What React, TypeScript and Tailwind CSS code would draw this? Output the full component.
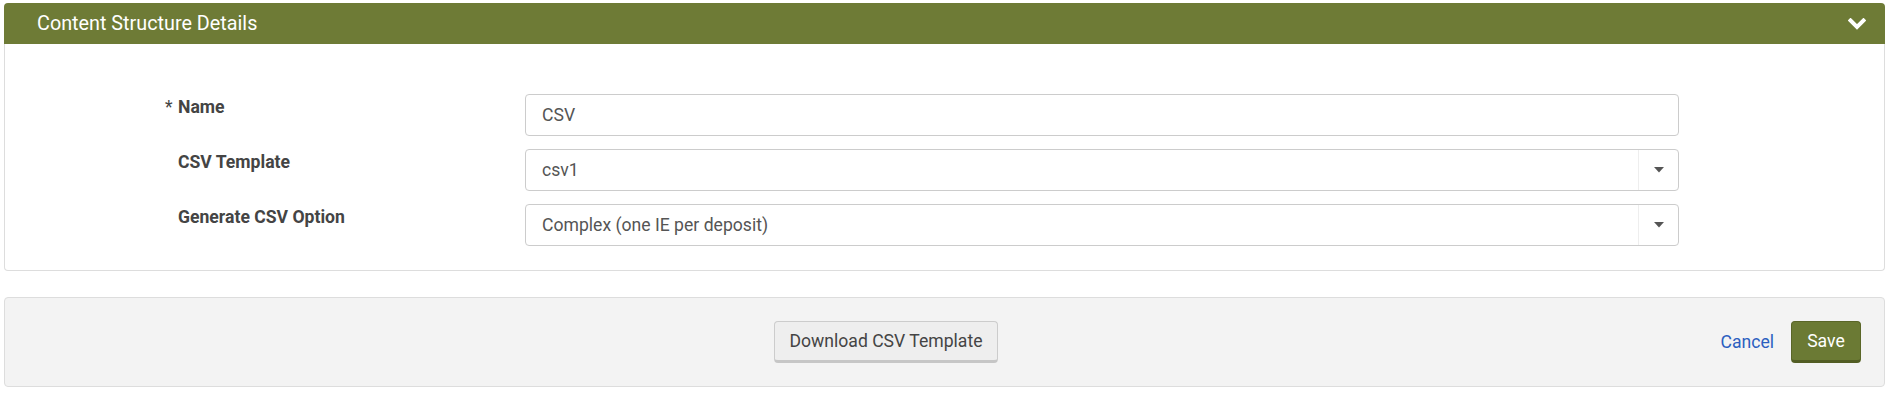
import React from "react";

function Chevron() {
  return (
    <svg width="18" height="12" viewBox="0 0 18 12" className="block">
      <path d="M2.5 2.5 L9 9 L15.5 2.5" fill="none" stroke="#ffffff" strokeWidth="4" strokeLinecap="square" />
    </svg>
  );
}

function Caret() {
  return (
    <svg width="10" height="6" viewBox="0 0 10 6" className="block">
      <path d="M0 0 H10 L5 5.5 Z" fill="#555555" />
    </svg>
  );
}

function Row({ label, required, children }: { label: string; required?: boolean; children: React.ReactNode }) {
  return (
    <div className="flex items-start">
      <div className="w-[520px] shrink-0 pl-[173px] pt-[1px] text-[17.6px] leading-6 font-bold text-[#444]">
        {required && <span className="-ml-[13px] inline-block w-[13px] font-normal">*</span>}
        {label}
      </div>
      <div className="w-[1154px] shrink-0">{children}</div>
    </div>
  );
}

function SelectBox({ value }: { value: string }) {
  return (
    <div className="flex h-[42px] items-stretch rounded-[4px] border border-[#cccccc] bg-white">
      <div className="flex flex-1 items-center px-[16px] text-[17.6px] text-[#555]">{value}</div>
      <div className="flex w-[40px] items-center justify-center border-l border-[#eeeeee]">
        <Caret />
      </div>
    </div>
  );
}

export default function App() {
  return (
    <div className="w-[1891px] bg-white pl-[4px] pr-[6px] pt-[3px] font-['Roboto',_'Liberation_Sans',_sans-serif]">
      <div>
        <div className="flex h-[41px] items-center justify-between rounded-t-[4px] bg-[#6e7b36] pl-[33px] pr-[19px]">
          <span className="text-[19.8px] text-white">Content Structure Details</span>
          <Chevron />
        </div>
        <div className="flex flex-col gap-[13px] rounded-b-[4px] border-x border-b border-[#dddddd] pb-[24px] pt-[50px]">
          <Row label="Name" required>
            <div className="flex h-[42px] items-center rounded-[4px] border border-[#cccccc] bg-white px-[16px] text-[17.6px] text-[#555]">
              CSV
            </div>
          </Row>
          <Row label="CSV Template">
            <SelectBox value="csv1" />
          </Row>
          <Row label="Generate CSV Option">
            <SelectBox value="Complex (one IE per deposit)" />
          </Row>
        </div>
      </div>
      <div className="mt-[26px] flex h-[90px] items-center rounded-[4px] border border-[#dddddd] bg-[#f3f3f3] pr-[23px]">
        <button className="ml-[769px] h-[42px] w-[224px] rounded-[4px] border border-[#cccccc] border-b-[3px] border-b-[#c6c6c6] bg-[#eeeeee] text-[17.6px] text-[#444]">
          Download CSV Template
        </button>
        <div className="ml-auto flex items-center gap-[17px]">
          <span className="text-[17.6px] text-[#2b5fc0]">Cancel</span>
          <button className="h-[42px] w-[70px] rounded-[4px] border border-[#5a6628] border-b-[3px] border-b-[#525d24] bg-[#6b7a34] text-[17.6px] text-white">
            Save
          </button>
        </div>
      </div>
    </div>
  );
}
